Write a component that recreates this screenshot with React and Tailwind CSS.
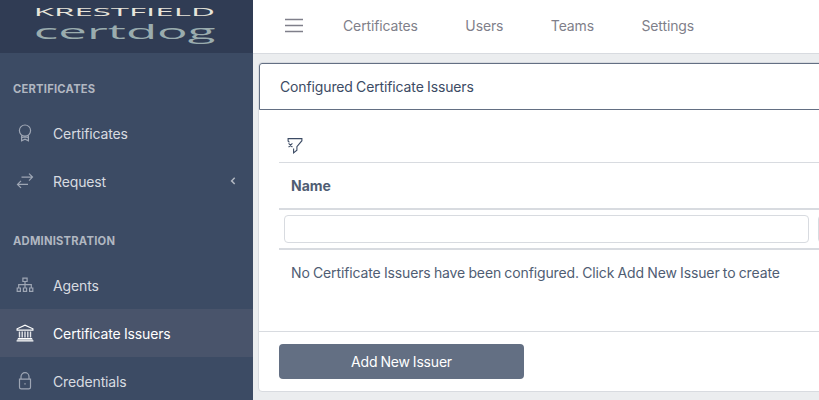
import React from "react";

const BadgeIcon = () => (
  <svg width="18" height="18" viewBox="0 0 18 18" fill="none" stroke="currentColor" strokeWidth="1.2">
    <circle cx="9" cy="6.6" r="5.6" />
    <path d="M5.6 11.2V16.8L9 15.2L12.4 16.8V11.2M6 13.4L9 12.8L12 13.4" />
  </svg>
);

const TransferIcon = () => (
  <svg width="18" height="18" viewBox="0 0 18 18" fill="none" stroke="currentColor" strokeWidth="1.2">
    <path d="M5.5 5.1H16.3M13 1.6L16.5 5.1L13 8.6M12 12.4H1.7M5 8.9L1.5 12.4L5 15.9" />
  </svg>
);

const SitemapIcon = () => (
  <svg width="18" height="18" viewBox="0 0 18 18" fill="none" stroke="currentColor" strokeWidth="1.2">
    <path d="M6.9 2.1H11.1V5.5H6.9ZM9 5.5V12M2.7 12V8.7H15.3V12M1.2 12H4.4V15.3H1.2ZM7.4 12H10.6V15.3H7.4ZM13.6 12H16.8V15.3H13.6Z" />
  </svg>
);

const InstitutionIcon = () => (
  <svg width="18" height="18" viewBox="0 0 18 18" fill="none" stroke="currentColor" strokeWidth="1.2">
    <path d="M1.1 6.1V4.8L9 1.1L16.9 4.8V6.1ZM1.8 14.6H16.2M.6 16.8H17.4" />
    <path d="M1.2 15.7H16.8" strokeOpacity=".6" />
    <path d="M3.5 7.5V13.5M6.2 7.5V13.5M9 7.5V13.5M11.8 7.5V13.5M14.5 7.5V13.5" strokeWidth="1.4" strokeOpacity=".85" />
  </svg>
);

const LockIcon = () => (
  <svg width="18" height="18" viewBox="0 0 18 18" fill="none" stroke="currentColor" strokeWidth="1.2">
    <path d="M3.5 7.1H14.5V15.2Q14.5 16.9 12.8 16.9H5.2Q3.5 16.9 3.5 15.2ZM5 7V4.7A4 4 0 0 1 13 4.7V7" />
    <path d="M8.3 11.2H9.7V12.6H8.3Z" fill="currentColor" stroke="none" />
  </svg>
);

const FilterClearIcon = () => (
  <svg width="18" height="18" viewBox="0 0 18 18" fill="none" stroke="currentColor" strokeWidth="1.1">
    <path d="M2.1 4.6V1.6H15.9V3.7L10.9 9.6V13.2L7.6 15.9V11.6M2.1 3.8L3.4 5.3M2.6 6.4L6.4 10.2M6.4 6.4L2.6 10.2" />
  </svg>
);

function NavTitle({ children }) {
  return (
    <div className="mt-4 flex h-10 items-center px-[13px] pt-0.5 text-[11.2px] font-bold leading-none tracking-[0.23px] text-[#b1b7c1] [word-spacing:0]">
      {children}
    </div>
  );
}

function NavItem({ icon, label, active, group }) {
  return (
    <a
      className={
        active
          ? "flex h-12 items-center bg-[#49546b] pl-4 text-white"
          : "flex h-12 items-center pl-4 text-[#d8dbe0]"
      }
    >
      <span className={active ? "text-white" : "text-[#9ea6b4]"}>{icon}</span>
      <span className="ml-[19px] pt-0.5 leading-5">{label}</span>
      {group && (
        <svg className="mr-4 ml-auto" width="8" height="10" viewBox="0 0 8 10" fill="none" stroke="#b1b7c1" strokeWidth="1.5">
          <path d="M5.7 1.8L2.6 4.9L5.7 8" />
        </svg>
      )}
    </a>
  );
}

export default function App() {
  return (
    <div className="flex h-[400px] w-[819px] overflow-hidden bg-[#ebedef] font-['Inter',sans-serif] text-[14px] tracking-[-0.13px] text-[#3c4b64] [word-spacing:-0.5px]">
      <aside className="h-[400px] w-[253px] shrink-0 overflow-hidden bg-[#3c4b64]">
        <div className="h-[53px] bg-[#303c54]">
          <svg width="253" height="53" className="block font-['Open_Sans',sans-serif] tracking-normal">
            <text transform="translate(33.8 15.5) scale(2.2 1)" fontSize="10.4" fontWeight="500" fill="#e8e5db" textLength="82.3" lengthAdjust="spacingAndGlyphs">KRESTFIELD</text>
            <text transform="translate(33.8 39.4) scale(2.2 1)" fontSize="20.5" fontWeight="500" fill="#9aacae" textLength="82.6" lengthAdjust="spacingAndGlyphs">certdog</text>
          </svg>
        </div>
        <nav>
          <NavTitle>CERTIFICATES</NavTitle>
          <NavItem icon={<BadgeIcon />} label="Certificates" />
          <NavItem icon={<TransferIcon />} label="Request" group />
          <NavTitle>ADMINISTRATION</NavTitle>
          <NavItem icon={<SitemapIcon />} label="Agents" />
          <NavItem icon={<InstitutionIcon />} label="Certificate Issuers" active />
          <NavItem icon={<LockIcon />} label="Credentials" />
        </nav>
      </aside>

      <main className="w-[566px] shrink-0 overflow-hidden">
        <header className="flex h-[54px] items-center border-b border-[#d8dbe0] bg-white pb-0.5 pl-8 text-[#7f7f8a]">
          <svg width="18" height="16" viewBox="0 0 18 16" fill="none" stroke="currentColor" strokeWidth="1.5" className="-mt-0.5">
            <path d="M0 2.4H18M0 8.4H18M0 14.4H18" />
          </svg>
          <span className="ml-10">Certificates</span>
          <span className="ml-[47.5px]">Users</span>
          <span className="ml-[47.5px]">Teams</span>
          <span className="ml-[47.5px]">Settings</span>
        </header>

        <section className="mt-2 ml-[5px] h-[330px] w-[700px] rounded border border-[#d8dbe0] bg-white">
          <div className="flex h-[47px] items-center rounded-t-[3px] border border-[#636f83] pl-5">
            Configured Certificate Issuers
          </div>
          <div className="h-[221px] pl-5">
            <div className="flex h-[52px] items-end pb-[7px] pl-[7px]">
              <FilterClearIcon />
            </div>
            <div className="flex h-12 items-center border-t border-b-2 border-[#d8dbe0] pl-3 font-bold tracking-normal text-[#4f5d73]">
              Name
            </div>
            <div className="flex h-10 gap-[9px] border-b-2 border-[#d8dbe0] pt-[5px] pl-[5px]">
              <div className="h-7 w-[525px] shrink-0 rounded border border-[#d8dbe0]" />
              <div className="h-7 w-[120px] shrink-0 rounded border border-[#d8dbe0]" />
            </div>
            <div className="flex h-[45px] items-center pb-px pl-3 text-[#4f5d73]">
              No Certificate Issuers have been configured. Click Add New Issuer to create
            </div>
          </div>
          <div className="h-[60px] border-t border-[#d8dbe0] pt-3 pl-5">
            <button className="block h-[35px] w-[245px] rounded bg-[#636f83] tracking-[-0.2px] text-white [word-spacing:-0.6px]">Add New Issuer</button>
          </div>
        </section>
      </main>
    </div>
  );
}
